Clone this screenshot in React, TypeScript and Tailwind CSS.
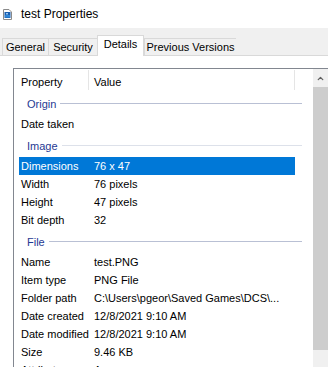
import { ChevronUp } from "lucide-react";

type Row =
  | { kind: "group"; label: string; line: string }
  | { kind: "item"; label: string; value: string; selected?: boolean };

const rows: Row[] = [
  { kind: "group", label: "Origin", line: "bg-[#b9c0d4]" },
  { kind: "item", label: "Date taken", value: "" },
  { kind: "group", label: "Image", line: "bg-[#dde1ea]" },
  { kind: "item", label: "Dimensions", value: "76 x 47", selected: true },
  { kind: "item", label: "Width", value: "76 pixels" },
  { kind: "item", label: "Height", value: "47 pixels" },
  { kind: "item", label: "Bit depth", value: "32" },
  { kind: "group", label: "File", line: "bg-[#b9c0d4]" },
  { kind: "item", label: "Name", value: "test.PNG" },
  { kind: "item", label: "Item type", value: "PNG File" },
  { kind: "item", label: "Folder path", value: "C:\\Users\\pgeor\\Saved Games\\DCS\\..." },
  { kind: "item", label: "Date created", value: "12/8/2021 9:10 AM" },
  { kind: "item", label: "Date modified", value: "12/8/2021 9:10 AM" },
  { kind: "item", label: "Size", value: "9.46 KB" },
  { kind: "item", label: "Attributes", value: "A" },
];

const FileIcon = () => (
  <svg width="9" height="11" viewBox="0 0 9 11" className="shrink-0">
    <path d="M0.5 0.5h5.5l2.5 2.5v7.5h-8z" fill="#ffffff" stroke="#8a8a8a" />
    <rect x="1.5" y="3" width="6" height="6" fill="#1b5fb0" />
    <rect x="2" y="6" width="5" height="2.5" fill="#2f86d6" />
    <rect x="3" y="4" width="2" height="1.5" fill="#9cc7ee" />
  </svg>
);

const tabs = [
  { label: "General", w: "w-[46px]" },
  { label: "Security", w: "w-[49px]" },
  { label: "Details", w: "w-[47px]", active: true },
  { label: "Previous Versions", w: "w-[92px]" },
];

export default function App() {
  return (
    <div className="w-[328px] h-[367px] overflow-hidden bg-white text-black font-['Liberation_Sans',Arial,sans-serif] flex flex-col">
      {/* title bar */}
      <div className="h-[28px] flex items-center gap-[9px] pl-[3px] shrink-0">
        <FileIcon />
        <span className="text-[12px] leading-none">test Properties</span>
      </div>

      {/* tab strip */}
      <div className="h-[28px] bg-[#f0f0f0] flex items-end shrink-0 text-[11px]">
        <div className="w-[2px] border-b border-[#d9d9d9]" />
        {tabs.map((t) =>
          t.active ? (
            <div
              key={t.label}
              className={`${t.w} h-[21px] bg-white border-t border-l border-r border-[#d9d9d9] flex items-center justify-center pb-[3px]`}
            >
              {t.label}
            </div>
          ) : (
            <div
              key={t.label}
              className={`${t.w} h-[18px] border border-r-0 border-[#d9d9d9] flex items-center justify-center last:border-r`}
            >
              {t.label}
            </div>
          )
        )}
        <div className="flex-1 border-b border-[#d9d9d9]" />
      </div>

      {/* content */}
      <div className="flex-1 pl-[13px] pt-[12px]">
        <div className="w-[320px] h-[320px] border-t border-l border-[#828790] flex text-[11px]">
          <div className="w-[299px] flex flex-col">
            <div className="h-[22px] flex shrink-0">
              <div className="w-[74px] pl-[7px] pt-[4px] flex items-center">Property</div>
              <div className="w-px bg-[#e5e5e5] my-px" />
              <div className="w-[205px] pl-[5px] pt-[4px] flex items-center">Value</div>
              <div className="w-px bg-[#e5e5e5] my-px" />
            </div>
            {rows.map((r) =>
              r.kind === "group" ? (
                <div key={r.label} className="h-[24px] pt-[2px] pl-[13px] pr-[11px] flex items-center shrink-0">
                  <span className="text-[#1f3a93]">{r.label}</span>
                  <div className={`flex-1 h-px ml-[4px] mb-[2px] ${r.line}`} />
                </div>
              ) : (
                <div
                  key={r.label}
                  className={`h-[18px] ml-[5px] mr-[18px] pl-[2px] flex items-center shrink-0 whitespace-nowrap ${
                    r.selected ? "bg-[#0078d7] text-white" : ""
                  }`}
                >
                  <div className="w-[73px]">{r.label}</div>
                  <div>{r.value}</div>
                </div>
              )
            )}
          </div>
          {/* scrollbar */}
          <div className="w-[17px] flex flex-col bg-[#f0f0f0]">
            <div className="h-[18px] flex items-center pl-[3px] text-[#606060]">
              <ChevronUp size={9} strokeWidth={3.5} />
            </div>
            <div className="h-[263px] bg-[#cdcdcd]" />
          </div>
        </div>
      </div>
    </div>
  );
}
